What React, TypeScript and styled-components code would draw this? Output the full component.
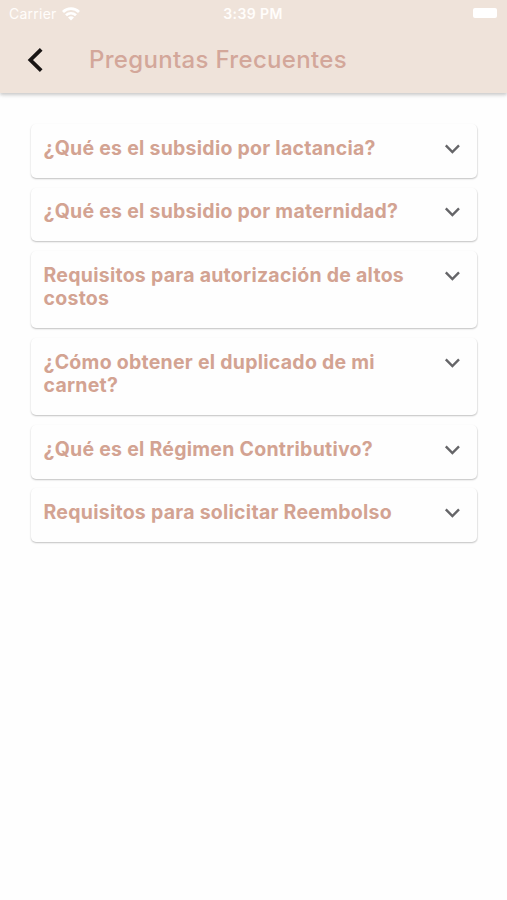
import React from "react";
import styled, { createGlobalStyle } from "styled-components";

const GlobalStyle = createGlobalStyle`
  * { box-sizing: border-box; }
  body {
    margin: 0;
    background: #fefefe;
    font-family: Inter, "Liberation Sans", sans-serif;
  }
`;

const Screen = styled.div`
  min-height: 900px;
  background: #fefefe;
`;

const Header = styled.header`
  height: 93px;
  background: #efe3da;
  box-shadow: 0 2px 3px rgba(0, 0, 0, 0.16), 0 3px 6px rgba(0, 0, 0, 0.05);
`;

const StatusBar = styled.div`
  height: 27px;
  padding: 0 10px 0 9px;
  display: grid;
  grid-template-columns: 1fr auto 1fr;
  align-items: center;
  color: #fffdfb;
  font-size: 14px;
  line-height: 27px;
`;

const Carrier = styled.div`
  display: flex;
  align-items: center;
  gap: 5px;
  letter-spacing: 0.25px;
`;

const Clock = styled.span`
  font-weight: 600;
  letter-spacing: 0.4px;
`;

const Battery = styled.span`
  justify-self: end;
  width: 24px;
  height: 10px;
  margin-bottom: 1px;
  border-radius: 2px;
  background: #fff;
`;

const Toolbar = styled.div`
  height: 66px;
  padding-left: 26px;
  display: flex;
  align-items: center;
`;

const BackButton = styled.button`
  width: 63px;
  height: 40px;
  padding: 0 0 1px;
  border: 0;
  background: none;
  display: flex;
  align-items: center;
`;

const Title = styled.h1`
  margin: 0;
  color: #d3a79a;
  font-size: 24px;
  line-height: 30px;
  font-weight: 500;
  letter-spacing: 0.32px;
  white-space: nowrap;
`;

const List = styled.main`
  padding: 31px 30px 0 31px;
  display: flex;
  flex-direction: column;
  gap: 9.9px;
`;

const Card = styled.section`
  padding: 12.8px 16px 17.6px 12.5px;
  display: flex;
  justify-content: space-between;
  align-items: flex-start;
  border-radius: 5px;
  background: #fefefe;
  box-shadow: 0 1px 2px rgba(0, 0, 0, 0.2), 0.5px 1px 1px rgba(0, 0, 0, 0.05);
`;

const Question = styled.h2`
  margin: 0;
  color: #d3a392;
  font-size: 19.5px;
  line-height: 23.3px;
  font-weight: 650;
  letter-spacing: 0.26px;
  white-space: pre-line;
`;

const Chevron = styled.svg`
  flex: none;
  margin-top: 4px;
`;

const questions = [
  "¿Qué es el subsidio por lactancia?",
  "¿Qué es el subsidio por maternidad?",
  "Requisitos para autorización de altos\ncostos",
  "¿Cómo obtener el duplicado de mi\ncarnet?",
  "¿Qué es el Régimen Contributivo?",
  "Requisitos para solicitar Reembolso",
];

const WifiIcon = () => (
  <svg width="18" height="14" viewBox="0 0 18 14" fill="none" stroke="#fff" strokeWidth="2.8">
    <path d="M1 5 C5.5 .6 12.5 .6 17 5" />
    <path d="M4 8.3 C7 5.6 11 5.6 14 8.3" />
    <path d="M6 10.6 Q9 8.1 12 10.6 L9 13.6Z" fill="#fff" stroke="none" />
  </svg>
);

export default function App() {
  return (
    <Screen>
      <GlobalStyle />
      <Header>
        <StatusBar>
          <Carrier>
            Carrier
            <WifiIcon />
          </Carrier>
          <Clock>3:39 PM</Clock>
          <Battery />
        </StatusBar>
        <Toolbar>
          <BackButton aria-label="Volver">
            <svg width="18" height="26" viewBox="0 0 18 26" fill="none">
              <path d="M15.2 2.4 L4.4 13 L15.2 23.6" stroke="#191514" strokeWidth="3.8" />
            </svg>
          </BackButton>
          <Title>Preguntas Frecuentes</Title>
        </Toolbar>
      </Header>
      <List>
        {questions.map((question) => (
          <Card key={question}>
            <Question>{question}</Question>
            <Chevron width="17" height="16" viewBox="0 0 17 16" fill="none">
              <path d="M1.8 4.4 L8.4 11 L15 4.4" stroke="#656568" strokeWidth="2.4" />
            </Chevron>
          </Card>
        ))}
      </List>
    </Screen>
  );
}
